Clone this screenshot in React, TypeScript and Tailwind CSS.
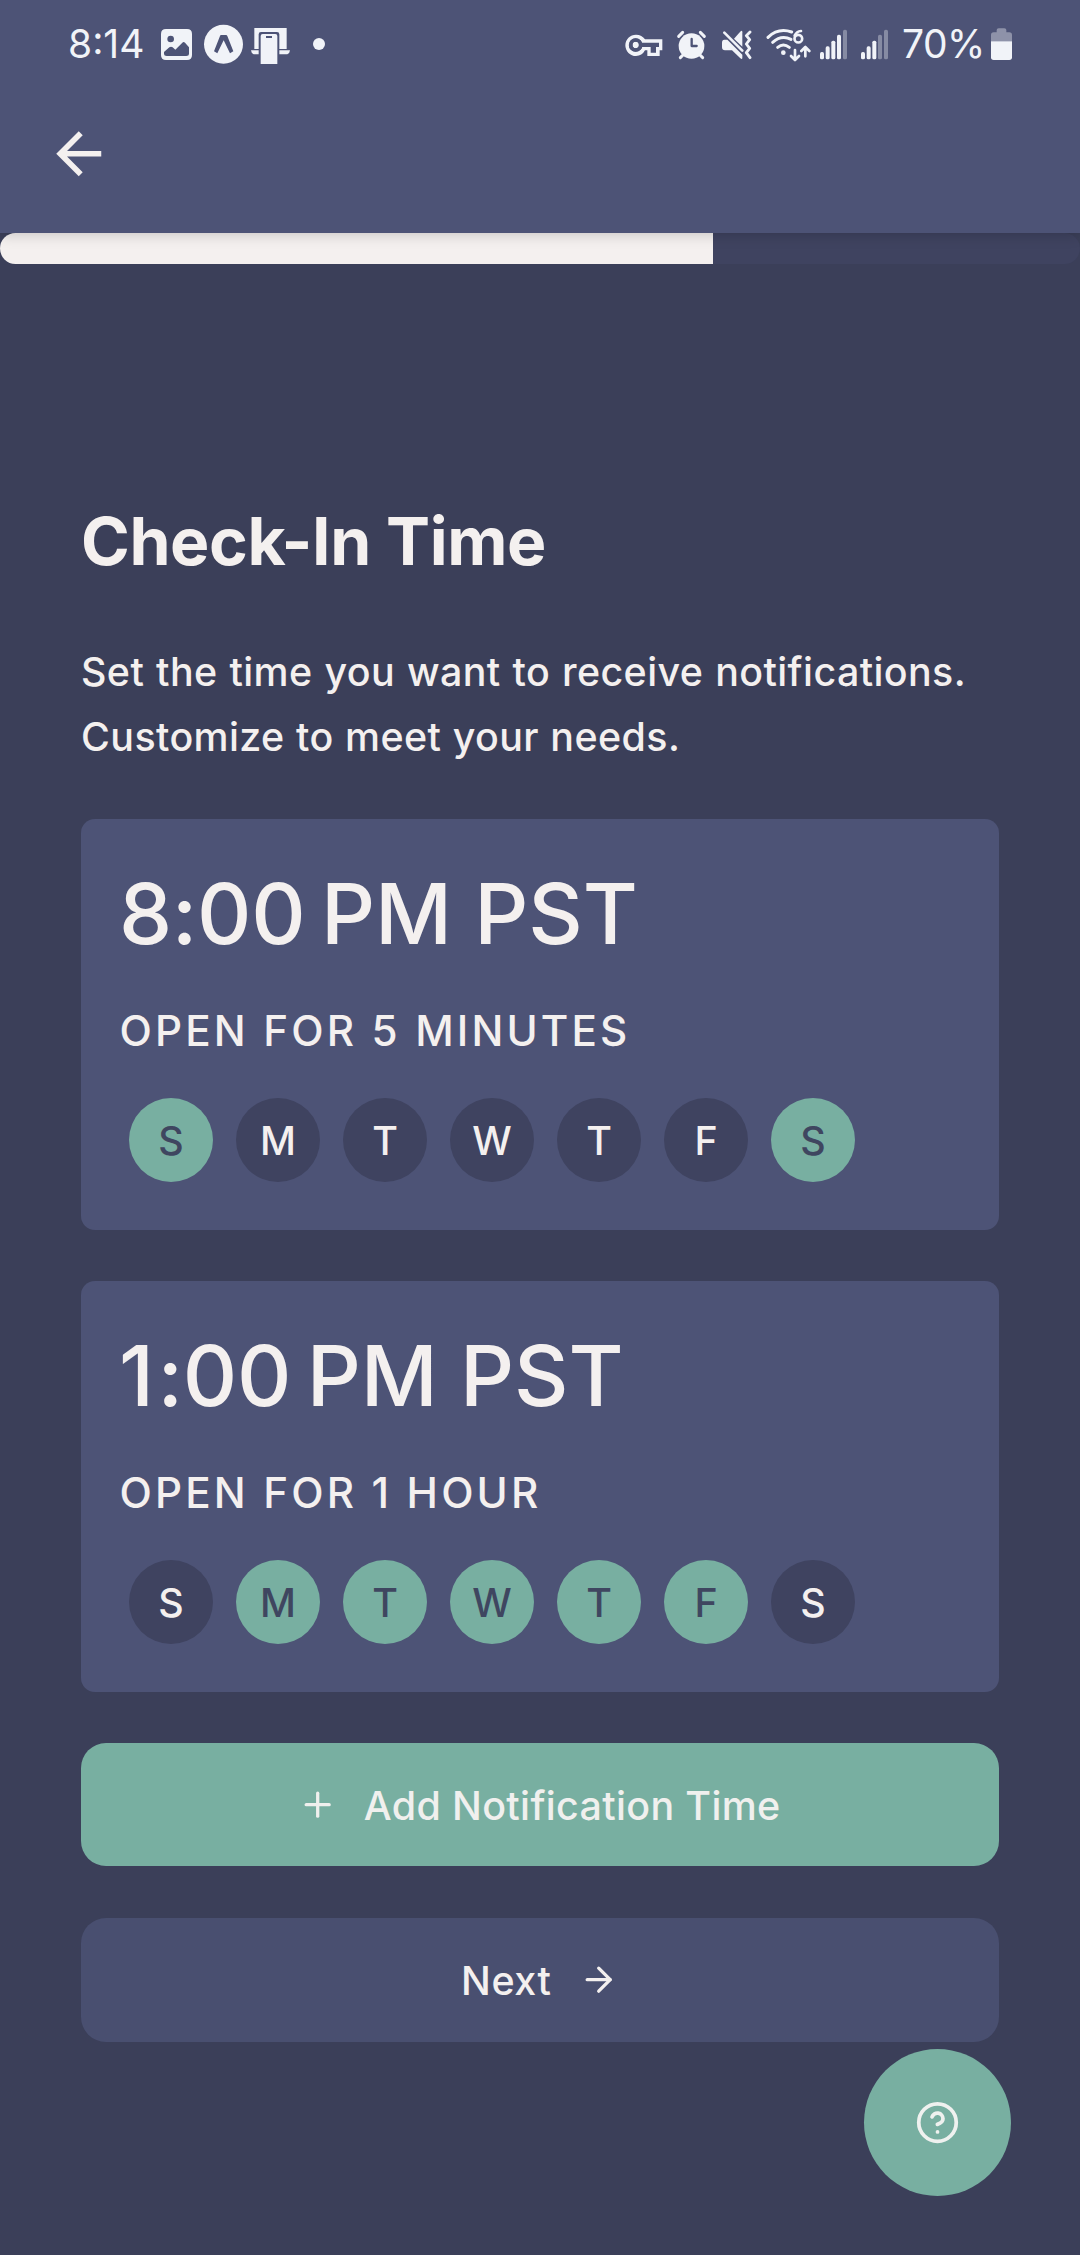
import type { ReactNode } from "react";
import { ArrowRight, Plus } from "lucide-react";

const DAYS = ["S", "M", "T", "W", "T", "F", "S"];

type Reminder = { hour: string; minutes: string; zone: string; detail: string; active: number[] };

const REMINDERS: Reminder[] = [
  { hour: "8", minutes: ":00", zone: "PM PST", detail: "OPEN FOR 5 MINUTES", active: [0, 6] },
  { hour: "1", minutes: ":00", zone: "PM PST", detail: "OPEN FOR 1 HOUR", active: [1, 2, 3, 4, 5] },
];

function Glyph({ box, className, children }: { box: string; className: string; children: ReactNode }) {
  return (
    <svg viewBox={box} className={`h-20 shrink-0 ${className}`} fill="#f1f3f8" aria-hidden="true">
      {children}
    </svg>
  );
}

function StatusBar() {
  return (
    <div className="flex h-20 items-center pr-[67px] pl-[68px] text-[39px] leading-[72px] text-[#f1f3f8]">
      <span className="w-[76px] pt-2 whitespace-nowrap">8:14</span>

      {/* picture */}
      <Glyph box="363 0 93 240" className="ml-[17px] w-[31px]">
        <path
          fillRule="evenodd"
          d="M378 87H441Q456 87 456 102V165Q456 180 441 180H378Q363 180 363 165V102Q363 87 378 87ZM372 156V162Q372 168 380 168H439Q447 168 447 162V142L435 128Q431 124 427 128L406 149L398 142Q393 138 388 142Z M392 107A10 10 0 1 0 392 127A10 10 0 1 0 392 107Z"
        />
      </Glyph>

      {/* caret badge */}
      <Glyph box="492 0 117 240" className="ml-3 w-[39px]">
        <circle cx="550.5" cy="133" r="58.5" />
        <path
          fill="#4d5376"
          d="M543 105H558Q561 105 562 108L580 154L570 160L551 121L532 160L522 154L540 108Q541 105 543 105Z"
        />
      </Glyph>

      {/* phone linked to a laptop */}
      <Glyph box="633 0 117 240" className="ml-2 w-[39px]">
        <path d="M643 84H740V147H718V103Q718 96 711 96H663Q656 96 656 103V147H643Z" />
        <path d="M633 151H656V163H641Q634 161 633 151ZM718 151H750Q749 161 742 163H718Z" />
        <path
          fillRule="evenodd"
          d="M668 102H706Q712 102 712 108V192H662V108Q662 102 668 102ZM678 108V114H696V108Z"
        />
      </Glyph>

      <Glyph box="819 0 36 240" className="ml-[23px] w-3">
        <circle cx="837" cy="132" r="18" />
      </Glyph>

      {/* VPN key */}
      <Glyph box="45 -30 114 240" className="ml-auto w-[38px]">
        <path d="M78 74Q96 74 105 88H157V121H149V138H112V121H105Q96 138 78 138A32 32 0 0 1 78 74Z" />
        <circle cx="77" cy="105" r="15" fill="none" stroke="#4d5376" strokeWidth="11" />
        <circle cx="77" cy="105" r="15" fill="none" stroke="#4d5376" strokeWidth="11" />
        <circle cx="77" cy="105" r="8" />
        <path fill="#4d5376" d="M92 98H147V111H138V128H122V111H92Z" />
      </Glyph>

      {/* alarm */}
      <Glyph box="198 -30 93 240" className="ml-[13px] w-[31px]">
        <circle cx="244.5" cy="108" r="38.5" />
        <path
          stroke="#f1f3f8"
          strokeWidth="9"
          strokeLinecap="round"
          fill="none"
          d="M206 79L218 67M283 79L271 67M219 135L211 143M270 135L278 143"
        />
        <path stroke="#4d5376" strokeWidth="7" strokeLinecap="round" strokeLinejoin="round" fill="none" d="M245 87V108H260" />
      </Glyph>

      {/* muted, vibrating */}
      <Glyph box="333 -30 93 240" className="ml-[14px] w-[31px]">
        <path d="M372 86L392 64Q397 60 397 67V110Z" />
        <path d="M336 98Q336 89 343 89H352L397 134V143Q397 150 391 145L366 121H345Q336 121 336 112Z" />
        <g stroke="#f1f3f8" strokeLinecap="round" strokeLinejoin="round" fill="none">
          <path strokeWidth="8" d="M343 68L397 122" />
          <path strokeWidth="8.5" d="M420 66L409 77L419 89L409 102L419 115L409 128L420 143" />
        </g>
      </Glyph>

      {/* Wi-Fi 6 with traffic arrows */}
      <Glyph box="468 -30 135 240" className="ml-[14px] w-[45px]">
        <g stroke="#f1f3f8" strokeLinecap="round" strokeLinejoin="round" fill="none">
          <path strokeWidth="9" d="M474 82Q505 52 545 66" />
          <path strokeWidth="9" d="M488 97Q514 74 543 88" />
          <path strokeWidth="9" d="M503 112Q520 98 538 112" />
          <path strokeWidth="8" d="M573 63Q560 64 554 77" />
          <circle cx="565" cy="86" r="11.5" strokeWidth="8" />
          <path strokeWidth="8" d="M555 120V148M543 138L555 150L567 138" />
          <path strokeWidth="8" d="M586 139V112M574 123L586 111L598 123" />
        </g>
        <circle cx="520" cy="128" r="7" />
      </Glyph>

      {/* cellular, SIM 1 */}
      <Glyph box="27 -30 87 240" className="ml-2 w-[29px]">
        <rect x="30" y="126" width="12" height="22" rx="5" />
        <rect x="47" y="109" width="12" height="39" rx="5" />
        <rect x="64" y="92" width="12" height="56" rx="5" />
        <rect x="81" y="74" width="12" height="74" rx="5" />
        <rect x="99" y="59" width="12" height="89" rx="5" opacity="0.35" />
      </Glyph>

      {/* cellular, SIM 2 */}
      <Glyph box="150 -30 87 240" className="ml-3 w-[29px]">
        <rect x="153" y="126" width="12" height="22" rx="5" />
        <rect x="170" y="109" width="12" height="39" rx="5" />
        <rect x="187" y="92" width="12" height="56" rx="5" />
        <rect x="204" y="74" width="12" height="74" rx="5" opacity="0.35" />
        <rect x="222" y="59" width="12" height="89" rx="5" opacity="0.35" />
      </Glyph>

      <span className="ml-[13px] w-[84px] pt-2 tracking-[-0.5px] whitespace-nowrap">70%</span>

      {/* battery */}
      <Glyph box="540 -30 69 240" className="ml-1 w-[23px]">
        <path
          opacity="0.4"
          d="M543 94V75Q543 67 551 67H560V60Q560 55 566 55H583Q589 55 589 60V67H598Q606 67 606 75V94Z"
        />
        <path d="M543 94H606V142Q606 150 598 150H551Q543 150 543 142Z" />
      </Glyph>
    </div>
  );
}

function ReminderCard({ hour, minutes, zone, detail, active }: Reminder) {
  return (
    <section className="h-[411px] rounded-[14px] bg-[#4d5376] pt-[44px] pl-[38px]">
      <div className="text-[84.4px] leading-[100px] font-medium whitespace-pre">
        <span className={hour === "1" ? "tracking-[3.5px]" : "tracking-[-0.3px]"}>{hour}</span>
        <span className="tracking-[-0.3px]">{minutes}</span>
        <span className="[word-spacing:-7px]"> </span>
        <span className="tracking-[-0.1px]">{zone}</span>
      </div>
      <div className="mt-[38px] ml-[0.5px] text-[42.2px] leading-[60px] font-medium tracking-[3.14px]">{detail}</div>
      <div className="mt-[37px] ml-[10px] flex gap-[23px]">
        {DAYS.map((day, i) => (
          <div
            key={i}
            className={`flex size-[84px] items-center justify-center rounded-full pt-[3px] text-[39.4px] font-medium ${
              active.includes(i) ? "bg-[#78afa1] text-[#3f4660]" : "bg-[#3f4360] text-[#f4f0ef]"
            }`}
          >
            {day}
          </div>
        ))}
      </div>
    </section>
  );
}

export default function App() {
  return (
    <div className="relative h-[2255px] w-[1080px] overflow-hidden bg-[#3b3f59] font-['Inter',sans-serif] text-[#f4f0ef]">
      <header className="relative z-10 h-[233px] bg-[#4d5376] shadow-[0_1px_14px_rgba(0,0,0,0.2)]">
        <StatusBar />
        <button aria-label="Back" className="mt-[40px] ml-[45px] block">
          <svg viewBox="0 0 24 24" className="size-[67.5px]" fill="#f4f0ef">
            <path d="M20 11H7.83l5.59-5.59L12 4l-8 8 8 8 1.41-1.41L7.83 13H20v-2z" />
          </svg>
        </button>
      </header>

      <div className="h-[31px] overflow-hidden rounded-full bg-[#3f4360]">
        <div className="h-full w-[713px] bg-[#f4f0ef]" />
      </div>

      <main className="px-[81px] pt-[232px]">
        <h1 className="text-[66px] leading-[90px] font-bold tracking-[-0.4px]">Check-In Time</h1>
        <p className="mt-[54px] text-[39.4px] leading-[65px] font-medium tracking-[0.4px] whitespace-nowrap">
          <span className="[word-spacing:1px]">Set the time you want to receive notifications.</span>
          <br />
          <span className="[word-spacing:0.5px]">Customize to meet your needs.</span>
        </p>

        <div className="mt-[49px] flex flex-col gap-[51px]">
          {REMINDERS.map((r) => (
            <ReminderCard key={r.hour} {...r} />
          ))}
        </div>

        <button className="mt-[51px] flex h-[123px] w-full items-center justify-center gap-[26px] rounded-[25px] bg-[#78afa1] pr-px text-[39.4px] font-medium tracking-[0.35px] text-[#f0f0ee]">
          <Plus className="size-[39.4px]" strokeWidth={2} />
          <span className="pt-[4px]">Add Notification Time</span>
        </button>

        <button className="mt-[52px] flex h-[124px] w-full items-center justify-center gap-[28px] rounded-[25px] bg-[#494f70] text-[39.4px] font-medium tracking-[0.56px]">
          <span className="pt-[3px]">Next</span>
          <ArrowRight className="size-[39.4px]" strokeWidth={2} />
        </button>
      </main>

      <button
        aria-label="Help"
        className="absolute top-[2049px] left-[864px] flex size-[147px] items-center justify-center rounded-full bg-[#78afa1] text-[#eff1ef]"
      >
        <svg
          viewBox="0 0 24 24"
          className="size-[45px]"
          fill="none"
          stroke="currentColor"
          strokeWidth="2"
          strokeLinecap="round"
          strokeLinejoin="round"
        >
          <circle cx="12" cy="12" r="10" />
          <path d="M9.09 9a3 3 0 0 1 5.83 1c0 2-3 3-3 3" />
          <path d="M12 17h.01" />
        </svg>
      </button>
    </div>
  );
}
